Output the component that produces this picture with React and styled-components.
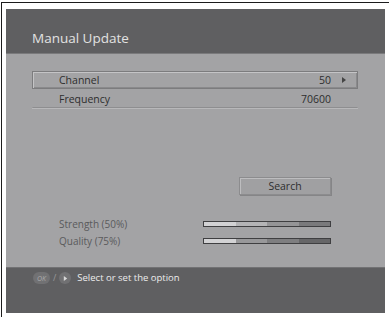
import React from 'react'
import styled, { createGlobalStyle } from 'styled-components'

const Global = createGlobalStyle`
  html, body { margin: 0; padding: 0; background: #fff; }
  body { font-family: "Open Sans", "Liberation Sans", sans-serif; }
`

const Frame = styled.div`
  width: 389px;
  height: 317px;
  box-sizing: border-box;
  padding: 2px 0 0 1px;
  background: #fff;
`

const FrameEdge = styled.div`
  height: 100%;
  box-sizing: border-box;
  border-top: 1px solid #1c1c1c;
  border-left: 1px solid #1c1c1c;
  padding: 6px 4px 4px 4px;
`

const Panel = styled.div`
  height: 100%;
  display: flex;
  flex-direction: column;
  background: #a3a3a5;
`

const Header = styled.div`
  height: 45px;
  box-sizing: border-box;
  background: #5f5f61;
  border-bottom: 1px solid #7a7a7c;
  display: flex;
  align-items: flex-end;
  padding: 0 0 6px 26px;
`

const Title = styled.h1`
  margin: 0;
  font-size: 13.5px;
  font-weight: 400;
  color: #e2e2e2;
`

const Body = styled.div`
  flex: 1;
  display: flex;
  flex-direction: column;
  padding: 17px 27px 0 26px;
`

const Row = styled.div`
  height: 18px;
  box-sizing: border-box;
  display: flex;
  align-items: center;
  padding: 0 0 0 26px;
  font-size: 10.5px;
  color: #2e2e2e;
  border: 1px solid ${p => (p.selected ? '#7c7c7e' : 'transparent')};
  box-shadow: ${p => (p.selected ? 'inset 1px 1px 0 #c4c4c6, inset -1px -1px 0 #8a8a8c' : 'none')};
  border-bottom: ${p => (p.selected ? '1px solid #7c7c7e' : '1px solid #8e8e90')};
  margin-bottom: ${p => (p.selected ? '1px' : '0')};
`

const Separator = styled.div`
  height: 1px;
  background: #b8b8ba;
`

const Label = styled.span`
  flex: 1;
`

const Value = styled.span`
  width: 60px;
  text-align: right;
`

const Arrow = styled.span`
  width: 26px;
  display: flex;
  justify-content: center;
`

const ButtonWrap = styled.div`
  display: flex;
  justify-content: flex-end;
  margin-top: 68px;
`

const SearchButton = styled.div`
  width: 92px;
  height: 18px;
  box-sizing: border-box;
  margin-right: 27px;
  display: flex;
  align-items: center;
  justify-content: center;
  font-size: 10.5px;
  color: #2e2e2e;
  background: #a0a0a2;
  border: 1px solid #8c8c8e;
  box-shadow: inset 1px 1px 0 #bdbdbf, 1px 1px 0 #858587;
`

const Signals = styled.div`
  margin-top: 22px;
  display: flex;
  flex-direction: column;
  gap: 4px;
  padding-left: 27px;
`

const SignalRow = styled.div`
  display: grid;
  grid-template-columns: 144px 128px;
  align-items: center;
  height: 13px;
  font-size: 10px;
  color: #5a5a5c;
`

const Bar = styled.div`
  height: 6px;
  box-sizing: border-box;
  border: 1px solid #3f3f41;
  display: grid;
  grid-template-columns: repeat(4, 1fr);
`

const Seg = styled.div`
  background: ${p => p.c};
`

const Footer = styled.div`
  height: 46px;
  box-sizing: border-box;
  background: #5f5f61;
  border-top: 1px solid #727274;
  display: flex;
  align-items: flex-start;
  padding: 4px 0 0 27px;
  gap: 3px;
  font-size: 9.5px;
  color: #ececec;
`

const OkKey = styled.span`
  display: inline-flex;
  align-items: center;
  justify-content: center;
  width: 17px;
  height: 12px;
  border-radius: 6px;
  background: #717173;
  color: #a9a9ab;
  font-size: 7px;
  font-style: italic;
`

const Slash = styled.span`
  color: #9a9a9c;
  font-size: 9px;
  line-height: 12px;
`

const RoundKey = styled.span`
  display: inline-flex;
  align-items: center;
  justify-content: center;
  width: 12px;
  height: 12px;
  border-radius: 50%;
  background: #717173;
  margin-right: 3px;
`

const Hint = styled.span`
  line-height: 12px;
`

const strength = ['#d2d2d4', '#b4b4b6', '#959597', '#7a7a7c']
const quality = ['#d2d2d4', '#98989a', '#7e7e80', '#666668']

const Tri = ({ color = '#3a3a3a', size = 6 }) => (
  <svg width={size} height={size + 2} viewBox="0 0 6 8">
    <path d="M1 1 L5 4 L1 7 Z" fill={color} />
  </svg>
)

export default function App() {
  return (
    <Frame>
      <Global />
      <FrameEdge>
        <Panel>
          <Header>
            <Title>Manual Update</Title>
          </Header>
          <Body>
            <Row selected>
              <Label>Channel</Label>
              <Value>50</Value>
              <Arrow><Tri color="#444" /></Arrow>
            </Row>
            <Row>
              <Label>Frequency</Label>
              <Value>70600</Value>
              <Arrow />
            </Row>
            <Separator />
            <ButtonWrap>
              <SearchButton>Search</SearchButton>
            </ButtonWrap>
            <Signals>
              <SignalRow>
                <span>Strength (50%)</span>
                <Bar>{strength.map((c, i) => <Seg key={i} c={c} />)}</Bar>
              </SignalRow>
              <SignalRow>
                <span>Quality (75%)</span>
                <Bar>{quality.map((c, i) => <Seg key={i} c={c} />)}</Bar>
              </SignalRow>
            </Signals>
          </Body>
          <Footer>
            <OkKey>OK</OkKey>
            <Slash>/</Slash>
            <RoundKey><Tri color="#d8d8d8" size={5} /></RoundKey>
            <Hint>Select or set the option</Hint>
          </Footer>
        </Panel>
      </FrameEdge>
    </Frame>
  )
}
